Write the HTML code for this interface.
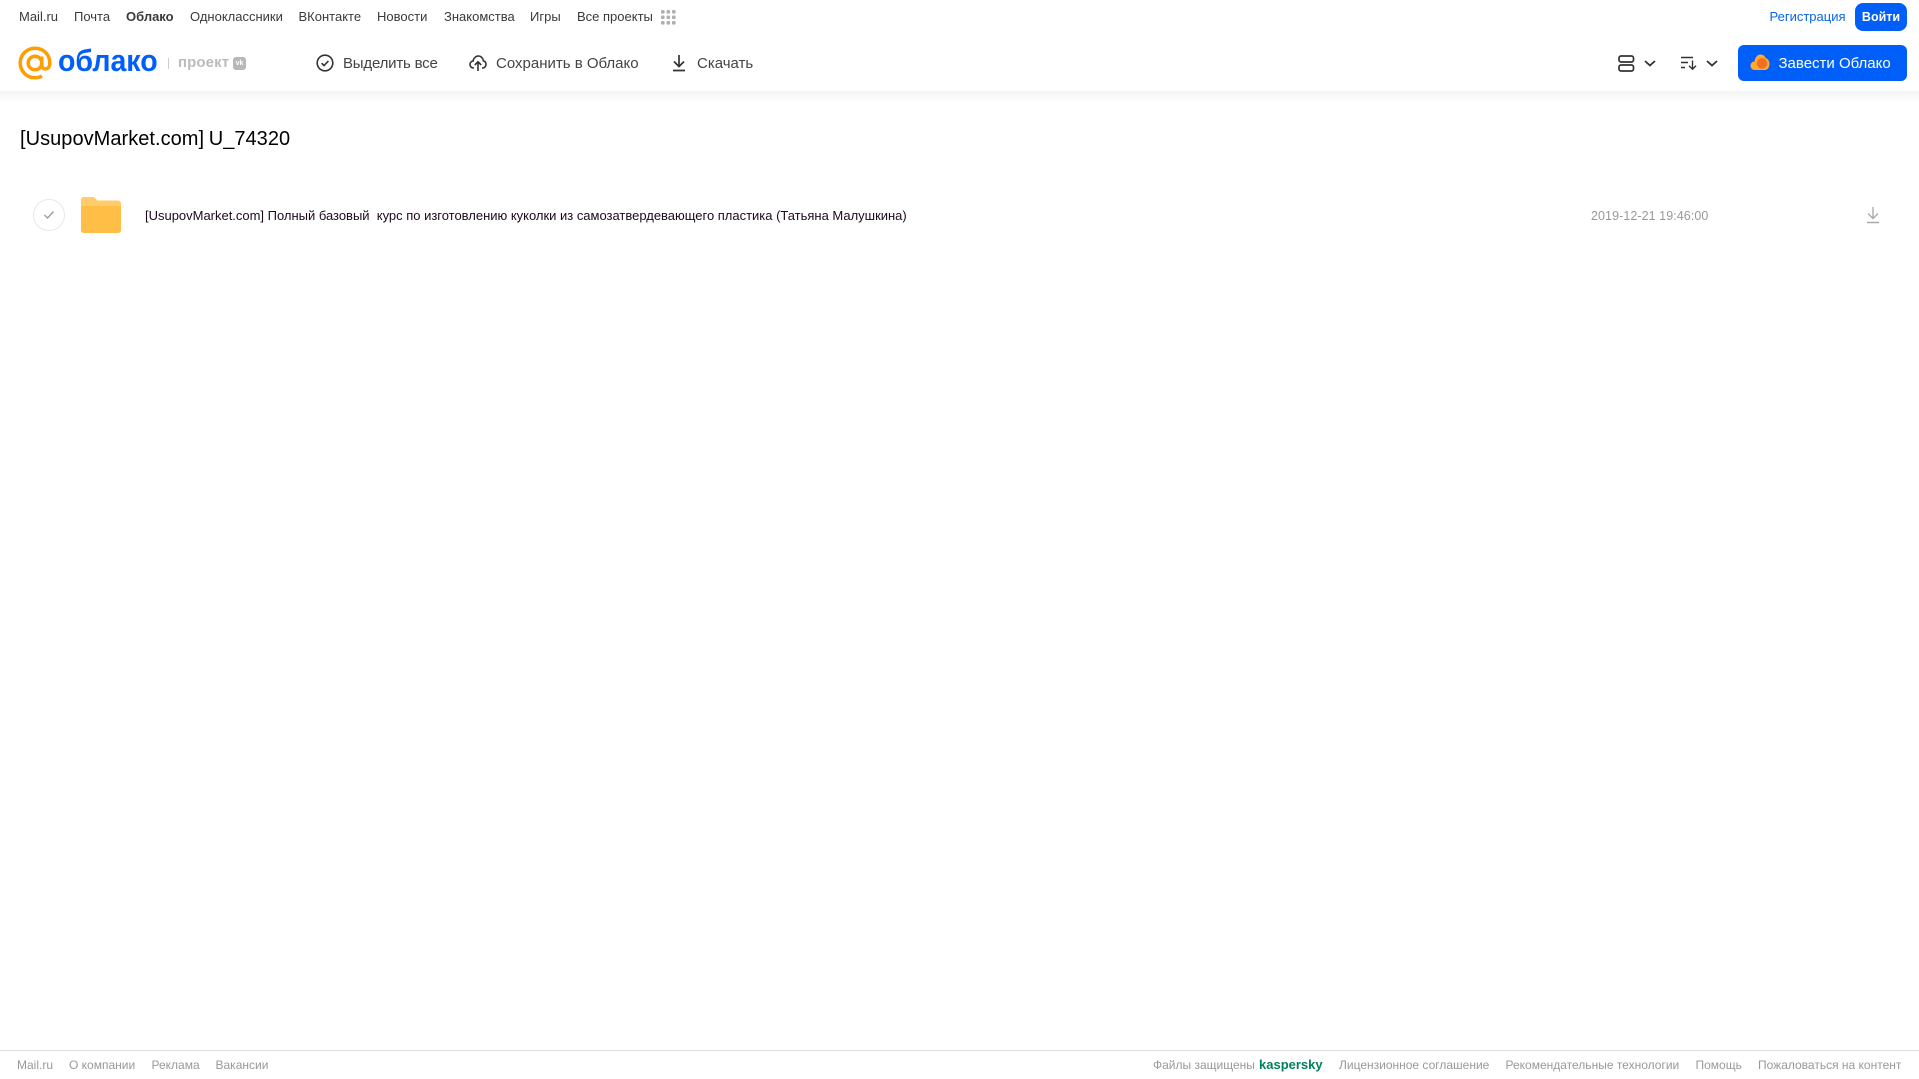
<!DOCTYPE html>
<html lang="ru"><head><meta charset="utf-8"><title>Облако</title>
<style>
html,body{margin:0;padding:0;background:#fff;width:1919px;height:1079px;overflow:hidden}
body{font-family:"Liberation Sans",Arial,sans-serif;position:relative}
.t{position:absolute;white-space:pre;line-height:1}
.n{font-size:13px;color:#3a3a3a;top:10px}
.b{font-size:15px;color:#444;top:56px}
.f{font-size:12px;color:#999;top:1059px}
svg{position:absolute;display:block}
</style></head><body>
<div style="position:absolute;left:0;top:91px;width:1919px;height:12px;background:linear-gradient(#f4f4f4,#fff)"></div>
<span class="t n" style="left:19px">Mail.ru</span>
<span class="t n" style="left:74px">Почта</span>
<span class="t n" style="left:126px;font-weight:700">Облако</span>
<span class="t n" style="left:190px">Одноклассники</span>
<span class="t n" style="left:298.500px">ВКонтакте</span>
<span class="t n" style="left:377px">Новости</span>
<span class="t n" style="left:444px">Знакомства</span>
<span class="t n" style="left:530px">Игры</span>
<span class="t n" style="left:577px">Все проекты</span>
<svg style="left:661px;top:10px" width="15" height="15" fill="#b0b0b0"><rect x="0" y="0" width="3.6" height="3.6" rx="1"/><rect x="5.5" y="0" width="3.6" height="3.6" rx="1"/><rect x="11" y="0" width="3.6" height="3.6" rx="1"/><rect x="0" y="5.5" width="3.6" height="3.6" rx="1"/><rect x="5.5" y="5.5" width="3.6" height="3.6" rx="1"/><rect x="11" y="5.5" width="3.6" height="3.6" rx="1"/><rect x="0" y="11" width="3.6" height="3.6" rx="1"/><rect x="5.5" y="11" width="3.6" height="3.6" rx="1"/><rect x="11" y="11" width="3.6" height="3.6" rx="1"/></svg>
<svg style="left:18px;top:46px" width="34" height="34" viewBox="0 0 34 34" fill="none" stroke="#ff9e00" stroke-width="3.500"><circle cx="17" cy="17" r="6.8"/><path d="M23.800 10.500V19c0 5.500 7.800 5.500 8-1.500C32 8.500 25.500 2.200 17 2.200 8.800 2.200 2.200 8.800 2.200 17S8.800 31.800 17 31.800c2.800 0 5-.6 7-1.800"/></svg>
<span class="t" style="left:58px;top:45px;font-size:31px;font-weight:700;color:#005ff9;transform:scaleX(.92);transform-origin:0 0">облако</span>
<div style="position:absolute;left:168px;top:58px;width:1px;height:11px;background:#ccc"></div>
<span class="t" style="left:178px;top:55px;font-size:15px;font-weight:700;color:#bbb;letter-spacing:.1px">проект</span>
<div style="position:absolute;left:233px;top:57px;width:13px;height:13px;border-radius:3px;background:#b8b8b8;color:#fff;font:700 7px/13px 'Liberation Sans',sans-serif;text-align:center">vk</div>
<svg style="left:316px;top:54px" width="18" height="18" fill="none" stroke="#333" stroke-width="1.6"><circle cx="9" cy="9" r="7.8"/><path d="M5.600 9.200l2.400 2.400 4.400-4.600"/></svg>
<span class="t b" style="left:343px;letter-spacing:-.2px">Выделить все</span>
<svg style="left:469px;top:54px" width="18" height="18" fill="none" stroke="#333" stroke-width="1.6"><path d="M5 14H4.500C2.500 14 1 12.500 1 10.500 1 8.700 2.300 7.300 4 7.100 4.600 4.300 6.600 2 9.300 2 12 2 14 4.100 14.400 6.800 16 7.200 17 8.600 17 10.300 17 12.400 15.500 14 13.500 14H13"/><path d="M9 17V8M5.800 11L9 7.800 12.200 11"/></svg>
<span class="t b" style="left:496px">Сохранить в Облако</span>
<svg style="left:672px;top:54px" width="14" height="18" fill="none" stroke="#333" stroke-width="1.7"><path d="M7 1v11M2 7.500l5 5 5-5M1 16.500h12"/></svg>
<span class="t b" style="left:697px">Скачать</span>
<span class="t n" style="left:1769.500px;color:#0a66e8">Регистрация</span>
<div style="position:absolute;left:1855px;top:3px;width:52px;height:28px;border-radius:8px;background:#005ff9;color:#fff;font:700 12.500px/28px 'Liberation Sans',sans-serif;text-align:center">Войти</div>
<svg style="left:1618px;top:55px" width="17" height="17" fill="none" stroke="#333" stroke-width="1.7"><rect x="1" y="1" width="14.500" height="6" rx="2"/><rect x="1" y="10" width="14.500" height="6" rx="2"/></svg>
<svg style="left:1644px;top:60px" width="12" height="7" fill="none" stroke="#333" stroke-width="1.8"><path d="M1 1l5 4.500L11 1"/></svg>
<svg style="left:1681px;top:56px" width="17" height="14" fill="none" stroke="#333" stroke-width="1.4"><path d="M0 1.500h12M0 6.500h7M0 11.500h4M11.500 4.500v8.500M8 9.800l3.500 3.400 3.500-3.400"/></svg>
<svg style="left:1706px;top:60px" width="12" height="7" fill="none" stroke="#333" stroke-width="1.8"><path d="M1 1l5 4.500L11 1"/></svg>
<div style="position:absolute;left:1738px;top:45px;width:169px;height:36px;border-radius:6px;background:#005ff9"></div>
<svg style="left:1750px;top:54px" width="20" height="17"><path d="M5 16C2 16 .5 14 .5 11.500.5 9 2.500 7.500 4.500 7.500 5 3.500 7.500 .5 10.500 .5c2.500 0 4.500 1.500 5.300 3.800 2.400.6 3.700 3 3.700 5.700 0 3.400-2 6-4.500 6z" fill="#ffa930"/><circle cx="12" cy="9.500" r="5.200" fill="#f4701e"/></svg>
<span class="t" style="left:1778.500px;top:56px;font-size:15px;color:#fff">Завести Облако</span>
<span class="t" style="left:20px;top:129px;font-size:20px;color:#000;word-spacing:-1px;letter-spacing:.04px">[UsupovMarket.com] U_74320</span>
<div style="position:absolute;left:33px;top:199px;width:30px;height:30px;border:1px solid #e8e8e8;border-radius:50%"></div>
<svg style="left:43px;top:210px" width="12" height="10" fill="none" stroke="#999" stroke-width="1.3"><path d="M1.500 5l3 3L10.500 1.500"/></svg>
<svg style="left:81px;top:197px" width="40" height="36"><path d="M0 3C0 1.300 1.300 0 3 0h8.500c1.500 0 2.500.7 3.500 2l1.500 1.500H37c1.700 0 3 1.300 3 3V33c0 1.700-1.300 3-3 3H3c-1.700 0-3-1.300-3-3z" fill="#ffcb6b"/><path d="M0 9H40V33c0 1.700-1.300 3-3 3H3c-1.700 0-3-1.300-3-3z" fill="#ffbe46"/></svg>
<span class="t" style="left:145px;top:209px;font-size:13px;letter-spacing:-.01px;color:#1c0a1c">[UsupovMarket.com] Полный базовый  курс по изготовлению куколки из самозатвердевающего пластика (Татьяна Малушкина)</span>
<span class="t" style="left:1591px;top:209.500px;font-size:12.500px;letter-spacing:.07px;color:#999">2019-12-21 19:46:00</span>
<svg style="left:1866px;top:206px" width="14" height="18" fill="none" stroke="#aaa" stroke-width="1.4"><path d="M7 1v11M2 7.500l5 5 5-5M1 16.500h12"/></svg>
<div style="position:absolute;left:0;top:1050px;width:1919px;height:1px;background:#ddd"></div>
<span class="t f" style="left:17px">Mail.ru</span>
<span class="t f" style="left:69px">О компании</span>
<span class="t f" style="left:151.500px">Реклама</span>
<span class="t f" style="left:215.500px">Вакансии</span>
<span class="t f" style="left:1153px">Файлы защищены</span>
<span class="t f" style="left:1259px;color:#00805f;font-weight:700;font-size:13px;top:1058px">kaspersky</span>
<span class="t f" style="left:1339px">Лицензионное соглашение</span>
<span class="t f" style="left:1505.500px">Рекомендательные технологии</span>
<span class="t f" style="left:1695.500px">Помощь</span>
<span class="t f" style="left:1758px">Пожаловаться на контент</span>
</body></html>
